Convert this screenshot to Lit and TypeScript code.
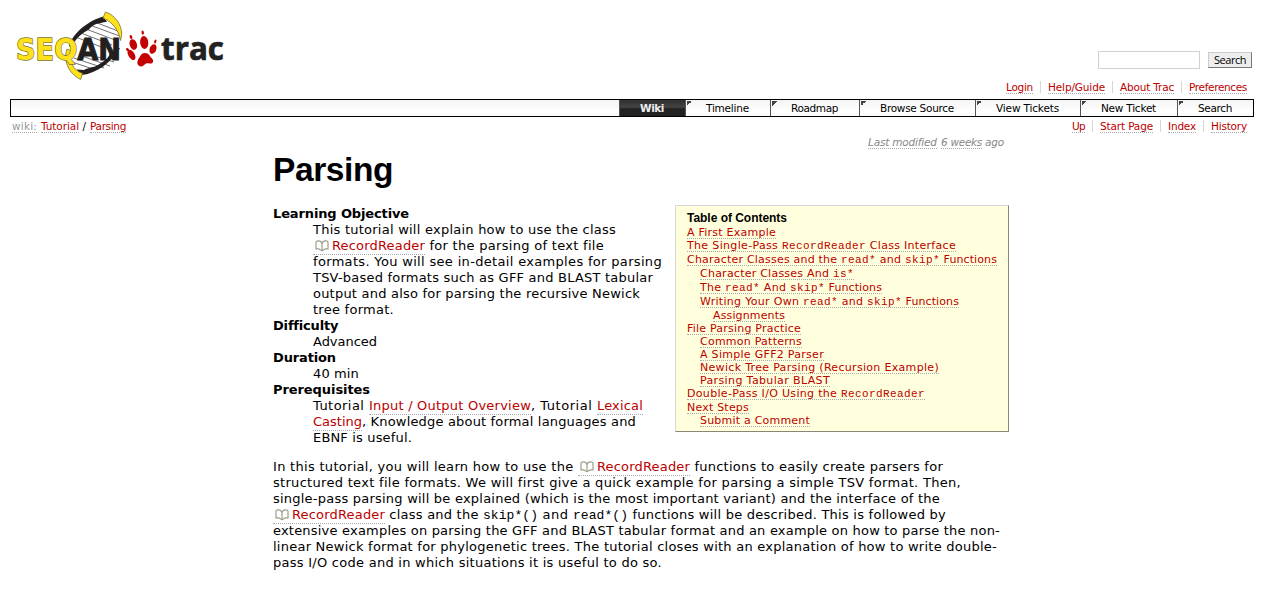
import { LitElement, html, svg, css } from "lit";
import { customElement, property } from "lit/decorators.js";

/** A run of text whose letters are spaced so that it fills the given advance. */
@customElement("text-run")
class TextRun extends LitElement {
  @property({ type: Number }) w = 0;
  @property() text = "";
  static styles = css`
    :host { display: block; flex: none; white-space: pre; }
    .run { display: inline-block; vertical-align: top; }
  `;
  render() {
    return html`<span class="run">${this.text}</span>`;
  }
  updated() {
    const el = this.renderRoot.querySelector(".run") as HTMLElement;
    el.style.letterSpacing = "0px";
    const natural = el.getBoundingClientRect().width;
    el.style.letterSpacing = (this.w - natural) / this.text.length + "px";
    this.style.width = this.w + "px";
  }
}

type Seg = [kind: string, text: string, w: number];

const bookIcon = svg`<svg class="book" width="14" height="12" viewBox="0 0 14 12">
  <path d="M7 11V4.500C6.800 2.300 5.800 1 3.600.9 1.800.8 1 1.500 1 2.500v6.300h2.200c1.800 0 2.600 1.900 3.800 1.900s2-1.900 3.800-1.900H13V2.500c0-1-.8-1.700-2.600-1.600C8.200 1 7.200 2.300 7 4.500" fill="none" stroke="#9a9f88" stroke-width="1.200"/>
</svg>`;

const line = (segs: Seg[]) => html`<div class="line">${segs.map(([k, t, w]) =>
  k === "api"
    ? html`<a class="link api">${bookIcon}<text-run .text=${t} .w=${w}></text-run></a>`
    : html`<text-run class=${k} .text=${t} .w=${w}></text-run>`)}</div>`;

const objective: Seg[][] = [
  [["", "This tutorial will explain how to use the class", 303]],
  [["api", "RecordReader", 93], ["", " for the parsing of text file", 179]],
  [["", "formats. You will see in-detail examples for parsing", 349]],
  [["", "TSV-based formats such as GFF and BLAST tabular", 340]],
  [["", "output and also for parsing the recursive Newick", 327]],
  [["", "tree format.", 81]],
];
const prerequisites: Seg[][] = [
  [["", "Tutorial ", 56], ["link", "Input / Output Overview", 162], ["", ", Tutorial ", 66], ["link", "Lexical", 46]],
  [["link", "Casting", 49], ["", ", Knowledge about formal languages and", 274]],
  [["", "EBNF is useful.", 99]],
];
const intro: Seg[][] = [
  [["", "In this tutorial, you will learn how to use the ", 305], ["api", "RecordReader", 93], ["", " functions to easily create parsers for", 253]],
  [["", "structured text file formats. We will first give a quick example for parsing a simple TSV format. Then,", 688]],
  [["", "single-pass parsing will be explained (which is the most important variant) and the interface of the", 667]],
  [["api", "RecordReader", 93], ["", " class and the ", 98], ["code", "skip*()", 55], ["", " and ", 35], ["code", "read*()", 55], ["", " functions will be described. This is followed by", 318]],
  [["", "extensive examples on parsing the GFF and BLAST tabular format and an example on how to parse the non-", 727]],
  [["", "linear Newick format for phylogenetic trees. The tutorial closes with an explanation of how to write double-", 724]],
  [["", "pass I/O code and in which situations it is useful to do so.", 389]],
];

type Entry = [level: number, height: number, segs: Seg[]];
const toc: Entry[] = [
  [0, 13, [["", "A First Example", 89]]],
  [0, 13, [["", "The Single-Pass ", 95], ["code", "RecordReader", 84], ["", " Class Interface", 90]]],
  [0, 14, [["", "Character Classes and the ", 154], ["code", "read*", 35], ["", " and ", 29], ["code", "skip*", 35], ["", " Functions", 57]]],
  [1, 14, [["", "Character Classes And ", 133], ["code", "is*", 21]]],
  [1, 14, [["", "The ", 25], ["code", "read*", 35], ["", " And ", 30], ["code", "skip*", 35], ["", " Functions", 57]]],
  [1, 14, [["", "Writing Your Own ", 103], ["code", "read*", 35], ["", " and ", 29], ["code", "skip*", 35], ["", " Functions", 57]]],
  [2, 14, [["", "Assignments", 72]]],
  [0, 13, [["", "File Parsing Practice", 114]]],
  [1, 13, [["", "Common Patterns", 102]]],
  [1, 13, [["", "A Simple GFF2 Parser", 124]]],
  [1, 13, [["", "Newick Tree Parsing (Recursion Example)", 239]]],
  [1, 13, [["", "Parsing Tabular BLAST", 130]]],
  [0, 13, [["", "Double-Pass I/O Using the ", 154], ["code", "RecordReader", 84]]],
  [0, 14, [["", "Next Steps", 62]]],
  [1, 13, [["", "Submit a Comment", 110]]],
];

const tabs: [string, number, number][] = [
  ["Timeline", 43, 85], ["Roadmap", 47, 89], ["Browse Source", 74, 116],
  ["View Tickets", 63, 105], ["New Ticket", 55, 97], ["Search", 34, 76],
];
const meta: [string, number][] = [["Login", 27], ["Help/Guide", 57], ["About Trac", 54], ["Preferences", 58]];
const context: [string, number][] = [["Up", 13], ["Start Page", 53], ["Index", 28], ["History", 36]];

const navLinks = (items: [string, number][]) => html`<div class="links">${items.map(([t, w]) =>
  html`<div class="cell"><text-run class="link" .text=${t} .w=${w}></text-run></div>`)}</div>`;

const logo = svg`<svg width="216" height="74" viewBox="10 8 216 74">
  <path d="M104 22C88 24 68 42 71 57C73 64 76 69 80 72C100 70 119 52 120 37C118 28 112 22 104 22z" fill="#fff"/>
  <path d="M96 22.500L118 31M91 25.500L119.500 36M86 29L119 41.500M81 33L112 45M77 37.500L104 48M74 58L104 68M72 62L96 70M82 56L110 66M98 57L114 62" fill="none" stroke="#333" stroke-width=".7"/>
  <path d="M103.500 16.500C90 20 73 32 69 46L71.500 47C76 38 82 33 89 29.500C91 26.500 95 24 98 23.500C101 23 104 21.500 107 22z" fill="#231f20"/>
  <path d="M119.500 48L110 53C108 60 102 62 98 65C93 68 89 67 84 70L76.500 69.500L82 75C97 73 111 63 120 48z" fill="#231f20"/>
  <path d="M105.500 12C115 15 125 27 120.500 40.500C118.500 29 112 22 103 18z" fill="#fee11a" stroke="#77702a" stroke-width=".8"/>
  <path d="M67 49C63 60 68 73 80.500 79.500L82.500 73.500C73 70 68 61 71 51z" fill="#fee11a" stroke="#77702a" stroke-width=".8"/>
  <text x="16" y="60" textLength="105" lengthAdjust="spacingAndGlyphs" class="name"><tspan class="seq">SEQ</tspan><tspan class="an">AN</tspan></text>
  <g fill="#c40000">
    <path d="M145 53C149 53 149.500 56 151.500 58C154.500 60.500 153 64 150 63.500C147 63 146 63 143.500 65.500C140.500 68 136.500 65 137.500 61.500C138 59 139 58.500 140 56.500C141.200 54 142.500 53 145 53z"/>
    <ellipse cx="144.200" cy="42.500" rx="4.100" ry="6.500" transform="rotate(-5 144.200 42.500)"/>
    <ellipse cx="133.300" cy="44.500" rx="3.600" ry="5.400" transform="rotate(-18 133.300 44.500)"/>
    <ellipse cx="153" cy="49" rx="3.300" ry="5" transform="rotate(20 153 49)"/>
    <ellipse cx="131.500" cy="54.800" rx="3.100" ry="5.700" transform="rotate(-32 131.500 54.800)"/>
    <ellipse cx="142.700" cy="32.700" rx="1.200" ry="2.100" transform="rotate(-8 142.700 32.700)"/>
    <ellipse cx="131" cy="37" rx="1.300" ry="2.100" transform="rotate(-15 131 37)"/>
    <ellipse cx="155.300" cy="41.500" rx="1.100" ry="2" transform="rotate(15 155.300 41.500)"/>
    <ellipse cx="127.500" cy="49.500" rx="1.300" ry="1.600" transform="rotate(-45 127.500 49.500)"/>
  </g>
  <text x="161" y="60" textLength="63" lengthAdjust="spacingAndGlyphs" class="trac">trac</text>
</svg>`;

@customElement("app-root")
class AppRoot extends LitElement {
  static styles = css`
    :host { display: block; box-sizing: border-box; height: 604px; overflow: hidden; background: #fff; color: #000;
      font: 13px/16px "DejaVu Sans", Verdana, sans-serif; padding: 8px 10px 0; }
    .header { display: flex; justify-content: space-between; height: 73px; }
    .header svg { display: block; }
    .name { font: bold 30px "DejaVu Sans", sans-serif; paint-order: stroke; }
    .seq { fill: #fee11a; stroke: #77702a; stroke-width: 1.4px; }
    .an { fill: #231f20; stroke: #231f20; stroke-width: 1px; }
    .trac { font: bold 33px "Open Sans", sans-serif; fill: #222; stroke: #222; stroke-width: .7px; }
    .search { display: flex; gap: 8px; padding: 43px 2px 0 0; align-items: flex-start; }
    .field { box-sizing: border-box; width: 102px; height: 18px; border: 1px solid #d0d0d0; }
    .button { box-sizing: border-box; width: 44px; height: 16px; margin-top: 1px; background: #eee; border: 1px solid #ccc;
      border-right-color: #777; border-bottom-color: #777; display: flex; justify-content: center;
      font: 11px/14px "Open Sans", sans-serif; color: #000; }
    .links { display: flex; justify-content: flex-end; font-size: 10.5px; line-height: 13px; padding-right: 7px; }
    .links .link, .crumbs .link, .crumbs .ul, .modified .ul { height: 12px; }
    .cell { display: flex; align-items: flex-start; padding-left: 7px; border-left: 1px solid #d7d7d7; margin-left: 7px; height: 12px; }
    .cell:first-child { border-left-color: transparent; }
    .meta { height: 18px; }
    .link { color: #b00; border-bottom: 1px dotted #aaa; }
    .nav { box-sizing: border-box; height: 18px; border: 1px solid #000; display: flex; justify-content: flex-end;
      background: linear-gradient(#f4f4f4, #fff 70%, #fafafa); font-size: 10.5px; line-height: 17px; }
    .tab { box-sizing: border-box; border-left: 1px solid #555; padding-left: 20px; position: relative; }
    .tab::before { content: ""; position: absolute; left: 1px; top: 1px; width: 5px; height: 5px;
      background: linear-gradient(135deg, #444 50%, transparent 50%); }
    .active { box-sizing: border-box; width: 66px; border-left: 1px solid #555; padding-left: 20px;
      background: linear-gradient(#333 10%, #444 45%, #222 55%); color: #eee; font-weight: bold; }
    .ctx { display: flex; justify-content: space-between; padding-top: 3px; height: 16px; font-size: 10.5px; line-height: 13px; }
    .crumbs { display: flex; align-items: flex-start; padding-left: 2px; line-height: 13px; }
    .muted { color: #999; }
    .modified { display: flex; align-items: flex-start; height: 14px; justify-content: flex-end;
      font: italic 10.5px/13px "DejaVu Sans", sans-serif; color: #888; width: 731px; }
    .ul { border-bottom: 1px dotted #aaa; }
    .page { width: 736px; margin-left: 263px; }
    h1 { font: bold 33.500px/40px "Liberation Sans", Arial, sans-serif; margin: 0 0 15px; display: flex; }
    .top { display: flex; justify-content: space-between; height: 254px; }
    .terms { padding-top: 1px; }
    .term { font-weight: bold; display: flex; height: 16px; }
    .def { padding-left: 40px; }
    .line { display: flex; height: 16px; align-items: flex-start; }
    .api { display: flex; height: 16px; }
    .book { margin: 2px 3px 0 2px; display: block; flex: none; }
    .code { font-family: "Liberation Mono", "Courier New", monospace; }
    .line .code { padding-top: 1px; }
    .toc { box-sizing: border-box; width: 334px; height: 227px; border: 1px solid #d7d7d7; border-right-color: #887; border-bottom-color: #887;
      background: #ffd; padding: 5px 0 0 11px; font-size: 11px; line-height: 14px; }
    .toc-title { font: bold 12px/14px "Liberation Sans", Arial, sans-serif; display: flex; height: 15px; }
    .entry { display: flex; align-items: flex-end; box-sizing: border-box; color: #b00; }
    .entry .inner { display: flex; align-items: baseline; border-bottom: 1px dotted #aaa; height: 12px; line-height: 13px; }
    .l1 { padding-left: 13px; }
    .l2 { padding-left: 26px; }
  `;
  render() {
    return html`
      <div class="header">${logo}
        <div class="search"><div class="field"></div>
          <div class="button"><text-run .text=${"Search"} .w=${32}></text-run></div></div>
      </div>
      <div class="meta">${navLinks(meta)}</div>
      <div class="nav">
        <div class="active"><text-run .text=${"Wiki"} .w=${24}></text-run></div>
        ${tabs.map(([t, w, full]) => html`<div class="tab" style="width:${full}px"><text-run .text=${t} .w=${w}></text-run></div>`)}
      </div>
      <div class="ctx">
        <div class="crumbs">
          <text-run class="ul muted" .text=${"wiki:"} .w=${25}></text-run>
          <text-run .text=${" "} .w=${4}></text-run>
          <text-run class="link" .text=${"Tutorial"} .w=${38}></text-run>
          <text-run .text=${" / "} .w=${11}></text-run>
          <text-run class="link" .text=${"Parsing"} .w=${36}></text-run>
        </div>
        ${navLinks(context)}
      </div>
      <div class="page">
        <div class="modified">
          <text-run class="ul" .text=${"Last modified"} .w=${69}></text-run>
          <text-run .text=${" "} .w=${4}></text-run>
          <text-run class="ul" .text=${"6 weeks"} .w=${41}></text-run>
          <text-run .text=${" ago"} .w=${22}></text-run>
        </div>
        <h1><text-run .text=${"Parsing"} .w=${120}></text-run></h1>
        <div class="top">
          <div class="terms">
            <div class="term"><text-run .text=${"Learning Objective"} .w=${136}></text-run></div>
            <div class="def">${objective.map(line)}</div>
            <div class="term"><text-run .text=${"Difficulty"} .w=${64}></text-run></div>
            <div class="def">${line([["", "Advanced", 64]])}</div>
            <div class="term"><text-run .text=${"Duration"} .w=${63}></text-run></div>
            <div class="def">${line([["", "40 min", 46]])}</div>
            <div class="term"><text-run .text=${"Prerequisites"} .w=${97}></text-run></div>
            <div class="def">${prerequisites.map(line)}</div>
          </div>
          <div class="toc">
            <div class="toc-title"><text-run .text=${"Table of Contents"} .w=${100}></text-run></div>
            ${toc.map(([lv, h, segs]) => html`<div class="entry l${lv}" style="height:${h}px"><div class="inner">${segs.map(
              ([k, t, w]) => html`<text-run class=${k} .text=${t} .w=${w}></text-run>`)}</div></div>`)}
          </div>
        </div>
        <div class="intro">${intro.map(line)}</div>
      </div>`;
  }
}
